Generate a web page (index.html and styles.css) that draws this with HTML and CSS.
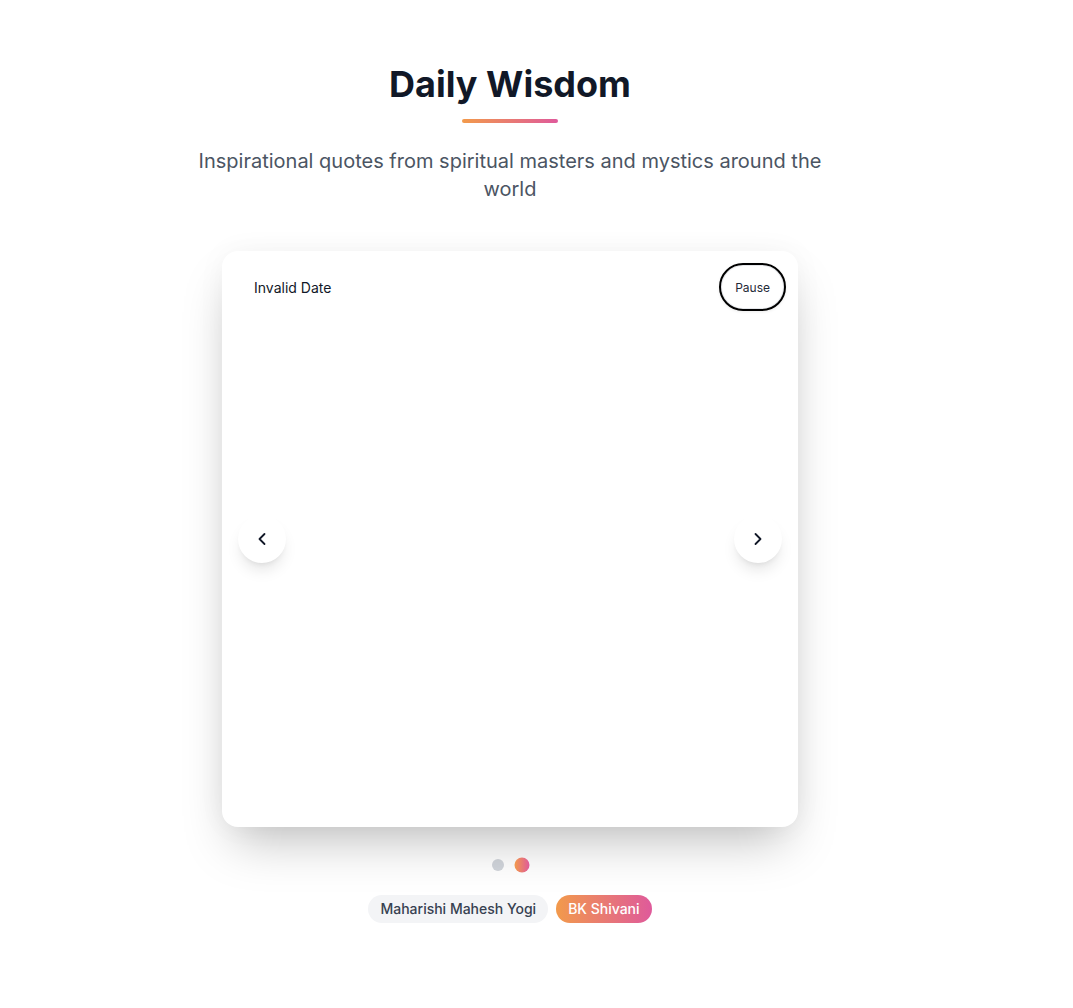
FILE: index.html
```html
<!DOCTYPE html>
<html lang="en">
<head>
<meta charset="utf-8">
<title>Daily Wisdom</title>
<link rel="stylesheet" href="styles.css">
</head>
<body>
<main class="page">
  <header class="intro">
    <h1 class="title">Daily Wisdom</h1>
    <div class="title-bar"></div>
    <p class="subtitle">Inspirational quotes from spiritual masters and mystics around the world</p>
  </header>

  <section class="carousel">
    <div class="card">
      <div class="card-top">
        <span class="date">Invalid Date</span>
        <button class="pause">Pause</button>
      </div>
      <button class="nav nav-prev" aria-label="Previous">
        <svg width="20" height="20" viewBox="0 0 24 24" fill="none" stroke="currentColor" stroke-width="2.2" stroke-linecap="round" stroke-linejoin="round"><path d="m15 18-6-6 6-6"/></svg>
      </button>
      <button class="nav nav-next" aria-label="Next">
        <svg width="20" height="20" viewBox="0 0 24 24" fill="none" stroke="currentColor" stroke-width="2.2" stroke-linecap="round" stroke-linejoin="round"><path d="m9 18 6-6-6-6"/></svg>
      </button>
    </div>

    <div class="dots">
      <span class="dot"></span>
      <span class="dot dot-active"></span>
    </div>

    <div class="pills">
      <span class="pill">Maharishi Mahesh Yogi</span>
      <span class="pill pill-active">BK Shivani</span>
    </div>
  </section>
</main>
</body>
</html>
```

FILE: styles.css
```css
* { box-sizing: border-box; }

html, body {
  margin: 0;
  padding: 0;
  background: #ffffff;
}

body {
  font-family: Inter, "Noto Sans", "Liberation Sans", sans-serif;
  color: #111827;
}

.page {
  width: 1020px;
  padding: 64px 16px 80px;
  display: flex;
  flex-direction: column;
  align-items: center;
}

.intro {
  display: flex;
  flex-direction: column;
  align-items: center;
  text-align: center;
}

.title {
  margin: 0;
  font-size: 36px;
  line-height: 40px;
  font-weight: 700;
  color: #111827;
}

.title-bar {
  width: 96px;
  height: 4px;
  margin-top: 15px;
  border-radius: 2px;
  background: linear-gradient(90deg, #f29a4b, #df5a9b);
}

.subtitle {
  margin: 24px 0 0;
  max-width: 672px;
  font-size: 20px;
  line-height: 28px;
  color: #4b5563;
}

.carousel {
  margin-top: 48px;
  display: flex;
  flex-direction: column;
  align-items: center;
}

.card {
  position: relative;
  width: 576px;
  height: 576px;
  background: #ffffff;
  border-radius: 16px;
  box-shadow: 0 25px 50px -12px rgba(0, 0, 0, 0.25), 0 0 30px rgba(0, 0, 0, 0.04);
}

.card-top {
  display: flex;
  align-items: center;
  justify-content: space-between;
  padding: 12px 12px 0 32px;
}

.date {
  padding-top: 2px;
  font-size: 14px;
  line-height: 20px;
  color: #111827;
}

.pause {
  height: 48px;
  padding: 0 14px;
  border: 2px solid #000000;
  border-radius: 9999px;
  background: #ffffff;
  font-family: inherit;
  font-size: 12px;
  color: #1f2937;
  box-shadow: inset 0 0 0 1px #e5e7eb, 0 1px 3px rgba(0, 0, 0, 0.08);
}

.nav {
  position: absolute;
  top: 264px;
  width: 48px;
  height: 48px;
  border: none;
  border-radius: 50%;
  background: #ffffff;
  color: #111827;
  display: flex;
  align-items: center;
  justify-content: center;
  padding: 0;
  box-shadow: 0 10px 15px -3px rgba(0, 0, 0, 0.1), 0 4px 6px -4px rgba(0, 0, 0, 0.1);
}

.nav-prev { left: 16px; }
.nav-next { right: 16px; }

.dots {
  margin-top: 32px;
  display: flex;
  gap: 12px;
  align-items: center;
}

.dot {
  width: 12px;
  height: 12px;
  border-radius: 50%;
  background: #d1d5db;
}

.dot-active {
  background: linear-gradient(90deg, #f29a4b, #df5a9b);
  transform: scale(1.25);
}

.pills {
  margin-top: 24px;
  display: flex;
  gap: 8px;
}

.pill {
  height: 28px;
  padding: 0 12px;
  border-radius: 9999px;
  background: #f3f4f6;
  color: #374151;
  font-size: 14px;
  font-weight: 500;
  line-height: 28px;
}

.pill-active {
  background: linear-gradient(90deg, #f29a4b, #df5a9b);
  color: #ffffff;
}
```
